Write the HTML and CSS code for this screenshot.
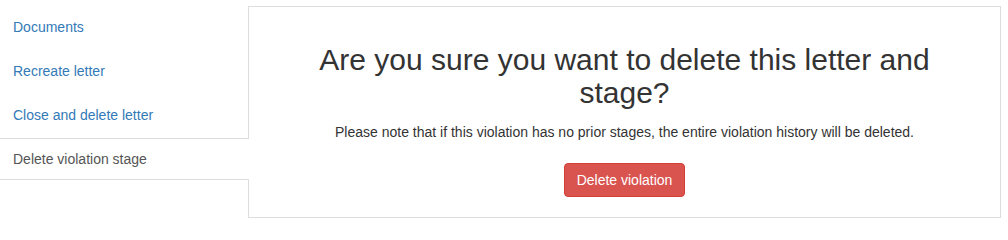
FILE: index.html
```html
<!DOCTYPE html>
<html>
<head>
<meta charset="utf-8">
<link rel="stylesheet" href="styles.css">
</head>
<body>
<div class="layout">
  <ul class="side-tabs">
    <li><a href="#">Documents</a></li>
    <li><a href="#">Recreate letter</a></li>
    <li><a href="#">Close and delete letter</a></li>
    <li class="active"><a href="#">Delete violation stage</a></li>
  </ul>
  <div class="panel">
    <h2 class="title">Are you sure you want to delete this letter and stage?</h2>
    <p class="note">Please note that if this violation has no prior stages, the entire violation history will be deleted.</p>
    <div class="actions">
      <button class="btn-danger" type="button">Delete violation</button>
    </div>
  </div>
</div>
</body>
</html>
```
FILE: styles.css
```css
html, body {
  margin: 0;
  padding: 0;
  background: #fff;
  font-family: "Liberation Sans", Arial, Helvetica, sans-serif;
  font-size: 14px;
  line-height: 20px;
  color: #333;
}

.layout {
  display: flex;
  align-items: flex-start;
  padding: 6px 7px 0 0;
}

.side-tabs {
  list-style: none;
  margin: 0 -1px 0 0;
  padding: 0;
  width: 249px;
  flex: none;
  position: relative;
  z-index: 2;
  display: flex;
  flex-direction: column;
  gap: 2px;
}

.side-tabs a {
  display: block;
  padding: 10px 12px 10px 13px;
  line-height: 20px;
  color: #337ab7;
  text-decoration: none;
  border: 1px solid transparent;
  border-left: none;
  border-right: none;
}

.side-tabs .active a {
  color: #555;
  background: #fff;
  border-top-color: #ddd;
  border-bottom-color: #ddd;
}

.panel {
  flex: 1;
  height: 210px;
  border: 1px solid #ddd;
  padding: 0 40px;
  text-align: center;
  box-sizing: content-box;
}

.title {
  margin: 36px 0 0;
  font-size: 30px;
  font-weight: 500;
  line-height: 33px;
  color: #333;
}

.note {
  margin: 13px 0 0;
  font-size: 14px;
  line-height: 20px;
}

.actions {
  margin-top: 21px;
}

.btn-danger {
  font-family: inherit;
  font-size: 14px;
  line-height: 20px;
  padding: 6px 12px;
  color: #fff;
  background: #d9534f;
  border: 1px solid #d43f3a;
  border-radius: 4px;
  cursor: pointer;
}
```
